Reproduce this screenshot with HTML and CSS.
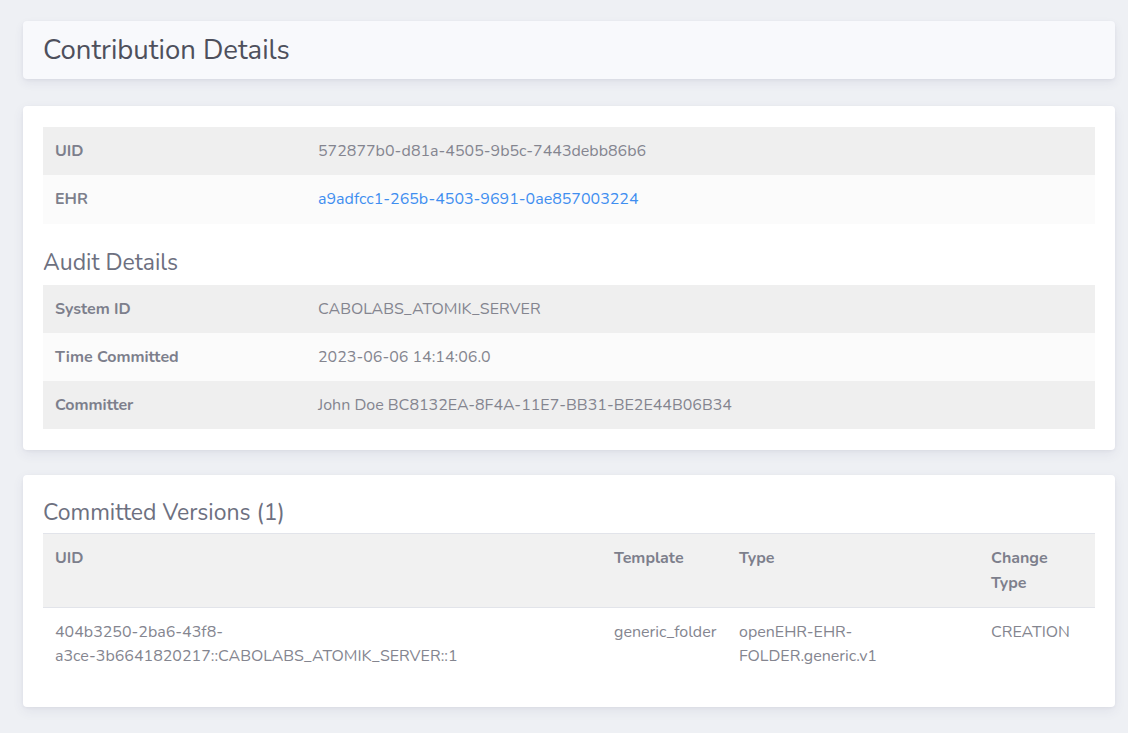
FILE: index.html
```html
<!DOCTYPE html>
<html lang="en">
<head>
    <meta charset="UTF-8">
    <meta name="viewport" content="width=device-width, initial-scale=1.0">
    <title>Contribution Details</title>
    <link rel="stylesheet" href="styles.css">
</head>
<body>

<div class="page">
    <div class="title-card">
        <h1>Contribution Details</h1>
    </div>

    <div class="card">
        <table class="details striped">
            <tr>
                <th>UID</th>
                <td>572877b0-d81a-4505-9b5c-7443debb86b6</td>
            </tr>
            <tr>
                <th>EHR</th>
                <td><a href="#">a9adfcc1-265b-4503-9691-0ae857003224</a></td>
            </tr>
        </table>

        <h2>Audit Details</h2>
        <table class="details striped">
            <tr>
                <th>System ID</th>
                <td>CABOLABS_ATOMIK_SERVER</td>
            </tr>
            <tr>
                <th>Time Committed</th>
                <td>2023-06-06 14:14:06.0</td>
            </tr>
            <tr>
                <th>Committer</th>
                <td>John Doe BC8132EA-8F4A-11E7-BB31-BE2E44B06B34</td>
            </tr>
        </table>
    </div>

    <div class="card">
        <h2 class="versions-title">Committed Versions (1)</h2>
        <table class="versions">
            <thead>
                <tr>
                    <th class="col-uid">UID</th>
                    <th class="col-template">Template</th>
                    <th class="col-type">Type</th>
                    <th class="col-change">Change Type</th>
                </tr>
            </thead>
            <tbody>
                <tr>
                    <td>404b3250-2ba6-43f8-<br>a3ce-3b6641820217::CABOLABS_ATOMIK_SERVER::1</td>
                    <td>generic_folder</td>
                    <td>openEHR-EHR-<br>FOLDER.generic.v1</td>
                    <td>CREATION</td>
                </tr>
            </tbody>
        </table>
    </div>
</div>

</body>
</html>
```

FILE: styles.css
```css
body {
    margin: 0;
    font-family: "Nunito", "Noto Sans", "Open Sans", sans-serif;
    font-size: 16px;
    line-height: 24.3px;
    color: #84858f;
    background-color: #eef0f4;
}
.page {
    padding: 21px 13px 20px 23px;
}
.title-card {
    background-color: #f8f9fc;
    border-radius: 4px;
    box-shadow: 0 4px 10px rgba(60, 65, 110, 0.08), 0 1px 3px rgba(60, 65, 110, 0.06);
    padding: 0 20px;
    height: 58px;
    display: flex;
    align-items: center;
    margin-bottom: 27px;
}
.title-card h1 {
    margin: 0;
    font-size: 27.5px;
    font-weight: 400;
    color: #4e505c;
}
.card {
    background-color: #ffffff;
    border-radius: 4px;
    box-shadow: 0 4px 12px rgba(60, 65, 110, 0.08), 0 1px 3px rgba(60, 65, 110, 0.06);
    padding: 21px 20px;
    margin-bottom: 25px;
}
.card h2 {
    margin: 0;
    font-size: 23px;
    font-weight: 400;
    color: #6d7080;
    line-height: 32px;
    padding: 23px 0 6px 0;
}
.card h2.versions-title {
    padding: 1px 0 4px 0;
}
table {
    width: 100%;
    border-collapse: collapse;
}
.details th,
.details td {
    padding: 12px;
    text-align: left;
    vertical-align: top;
}
.details th {
    width: 25%;
    font-weight: 700;
    color: #7d7f8c;
}
.striped tr:nth-child(odd) {
    background-color: #efefef;
}
.striped tr:nth-child(even) {
    background-color: #fbfbfb;
}
.details a {
    color: #3f8ef0;
    text-decoration: none;
}
.versions {
    table-layout: fixed;
}
.versions th,
.versions td {
    box-sizing: border-box;
    padding: 12px;
    text-align: left;
    vertical-align: top;
}
.versions thead tr {
    background-color: #f1f1f1;
    border-top: 1px solid #e2e4ea;
    border-bottom: 1px solid #e2e4ea;
}
.versions th {
    font-weight: 700;
    color: #7d7f8c;
    padding-bottom: 12px;
}
.versions td {
    padding-top: 12px;
    padding-bottom: 17px;
}
.col-uid { width: 559px; }
.col-template { width: 125px; }
.col-type { width: 252px; }
.col-change { width: 116px; }
```
